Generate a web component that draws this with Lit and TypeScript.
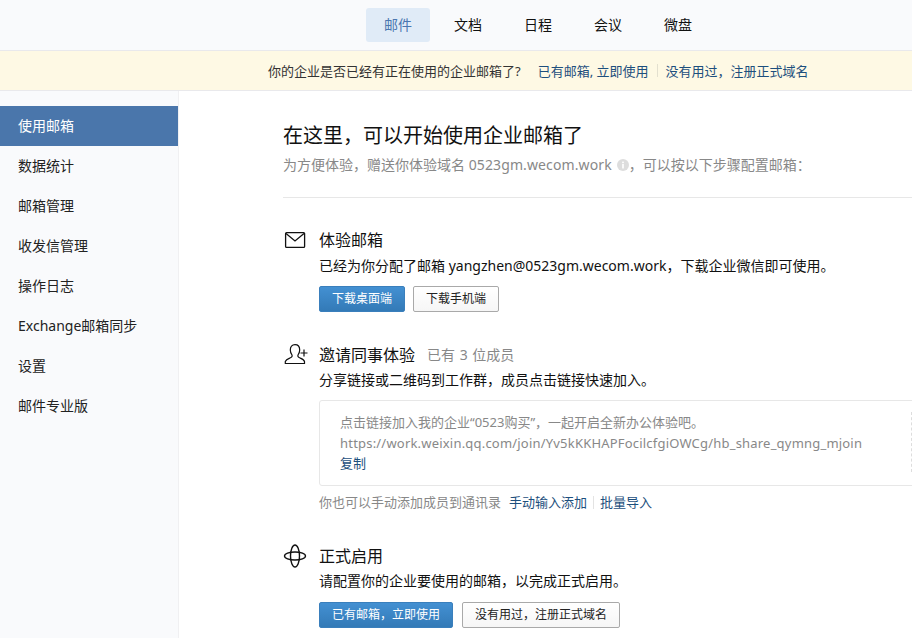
import { LitElement, html, css } from "lit";
import { customElement } from "lit/decorators.js";

const NAV = ["使用邮箱", "数据统计", "邮箱管理", "收发信管理", "操作日志", "Exchange邮箱同步", "设置", "邮件专业版"];
const TABS = ["邮件", "文档", "日程", "会议", "微盘"];

@customElement("app-root")
export class AppRoot extends LitElement {
  static styles = css`
    :host { display: block; width: 912px; height: 638px; overflow: hidden; background: #fff; font-family: "Noto Sans", "Noto Sans CJK SC", sans-serif; font-size: 14px; color: #111; }
    .top { height: 50px; display: flex; gap: 6px; padding: 8px 0 0 366px; box-sizing: border-box; background: #f9fafc; }
    .tab { width: 64px; height: 34px; line-height: 34px; text-align: center; color: #111; border-radius: 3px; }
    .tab.on { background: #e0ebf7; color: #4a76b0; }
    .banner { height: 41px; background: #fef9e4; border-top: 1px solid #e9e9ec; border-bottom: 1px solid #e9e9ec; box-sizing: border-box; display: flex; align-items: center; padding-left: 268px; font-size: 13px; color: #333; }
    .banner a { color: #1d4f7d; }
    .banner .first { margin-left: 17px; }
    .bsep { width: 1px; height: 13px; background: #e3e0cf; margin: 0 8px; }
    .body { display: flex; height: 547px; }
    .side { width: 179px; flex: none; background: #f9fafc; border-right: 1px solid #f0f0f2; box-sizing: border-box; padding-top: 15px; }
    .side div { height: 40px; line-height: 40px; padding-left: 18px; color: #222; }
    .side .on { background: #4a76ab; color: #fff; }
    .main { padding: 30px 0 0 104px; flex: 1; min-width: 0; overflow: hidden; }
    h1 { font-size: 20px; font-weight: 400; margin: 0; color: #111; line-height: 30px; }
    .sub { display: flex; align-items: center; margin-top: 4px; line-height: 20px; color: #888; white-space: pre; }
    .info { margin: 0 0 0 5px; flex: none; }
    .ls { letter-spacing: 0.12px; }
    .rule { height: 1px; background: #e7e7e7; margin: 22px 0 30px; }
    .sec { display: grid; grid-template-columns: 36px 1fr; }
    .sec + .sec { margin-top: 31px; }
    .ico { display: block; margin-top: 2px; }
    .ico.person { margin-top: 1px; }
    .ico.orbit { margin-top: 0; }
    .head { display: flex; align-items: center; height: 24px; line-height: 24px; }
    .title { font-size: 16px; color: #111; }
    .count { color: #888; margin-left: 12px; word-spacing: 1px; }
    .desc { line-height: 20px; margin-top: 4px; color: #111; white-space: nowrap; }
    .desc.tight { margin-top: 3px; }
    .btns { display: flex; gap: 8px; margin-top: 10px; }
    .btns.wide { gap: 9px; margin-top: 11px; }
    .btn { height: 26px; box-sizing: border-box; padding: 0 12px; line-height: 24px; font-size: 12px; border-radius: 2px; white-space: nowrap; border: 1px solid #a9a9a9; background: linear-gradient(#fff, #f6f6f6); color: #222; }
    .btn.pri { border-color: #3a7fbc; background: linear-gradient(#4390d2, #337ab7); color: #fff; }
    .box { margin-top: 10px; height: 86px; width: 640px; box-sizing: border-box; border: 1px solid #e7e7e7; border-radius: 3px; display: flex; align-items: center; padding: 0 0 2px 20px; color: #888; font-size: 13px; }
    .lines { width: 571px; height: 60px; flex: none; border-right: 1px dashed #ddd; line-height: 20.5px; white-space: nowrap; }
    .lines a { color: #1d4f7d; }
    .url { letter-spacing: 0.2px; }
    .foot { display: flex; align-items: center; margin: 6px 0 1px; line-height: 20px; color: #888; font-size: 13px; }
    .foot a { color: #1d4f7d; }
    .foot .l1 { margin-left: 8px; }
    .fsep { width: 1px; height: 13px; background: #e3e3e3; margin: 0 6px; }
  `;
  render() {
    return html`
      <div class="top">
        ${TABS.map((t, i) => html`<div class="tab ${i === 0 ? "on" : ""}">${t}</div>`)}
      </div>
      <div class="banner">
        <span>你的企业是否已经有正在使用的企业邮箱了?</span>
        <a class="first">已有邮箱, 立即使用</a><span class="bsep"></span><a>没有用过&#xFF0C;注册正式域名</a>
      </div>
      <div class="body">
        <div class="side">
          ${NAV.map((t, i) => html`<div class="${i === 0 ? "on" : ""}">${t}</div>`)}
        </div>
        <div class="main">
          <h1>在这里&#xFF0C;可以开始使用企业邮箱了</h1>
          <div class="sub"><span>为方便体验&#xFF0C;赠送你体验域名 <span class="ls">0523gm.wecom.work</span></span><svg class="info" width="12" height="12" viewBox="0 0 12 12"><circle cx="6" cy="6" r="6" fill="#ddd"/><rect x="5.2" y="5" width="1.6" height="4.5" fill="#fff"/><rect x="5.2" y="2.6" width="1.6" height="1.6" fill="#fff"/></svg><span>&#xFF0C;可以按以下步骤配置邮箱&#xFF1A;</span></div>
          <div class="rule"></div>

          <div class="sec">
            <svg class="ico" width="24" height="20" viewBox="0 0 24 20" fill="none" stroke="#111" stroke-width="1.3"><rect x="2.6" y="2.6" width="19" height="14.8" rx="1"/><path d="M3 3.5l9 7.5 9-7.5"/></svg>
            <div>
              <div class="head"><span class="title">体验邮箱</span></div>
              <div class="desc">已经为你分配了邮箱 yangzhen@0523gm.wecom.work&#xFF0C;下载企业微信即可使用。</div>
              <div class="btns"><div class="btn pri">下载桌面端</div><div class="btn">下载手机端</div></div>
            </div>
          </div>

          <div class="sec">
            <svg class="ico person" width="26" height="22" viewBox="0 0 26 22" fill="none" stroke="#111" stroke-width="1.2"><path d="M12 .7C9 .7 7.300 3 7.300 6 7.300 8.500 8.300 10 9 11 9.500 12.500 8.500 13.500 7 14 5 14.800 3 15.500 2.300 17.500V19.500H21.500V17.500C21 15.500 19 14.800 17 14 15.500 13.500 14.500 12.500 15 11 15.700 10 16.700 8.500 16.700 6 16.700 3 15 .7 12 .7Z"/><path d="M17.500 9h7M21 5.500v7"/></svg>
            <div>
              <div class="head"><span class="title">邀请同事体验</span><span class="count">已有 3 位成员</span></div>
              <div class="desc tight">分享链接或二维码到工作群&#xFF0C;成员点击链接快速加入。</div>
              <div class="box"><div class="lines">点击链接加入我的企业“0523购买”&#xFF0C;一起开启全新办公体验吧。<br><span class="url">https://work.weixin.qq.com/join/Yv5kKKHAPFocilcfgiOWCg/hb_share_qymng_mjoin</span><br><a>复制</a></div></div>
              <div class="foot">你也可以手动添加成员到通讯录<a class="l1">手动输入添加</a><span class="fsep"></span><a>批量导入</a></div>
            </div>
          </div>

          <div class="sec">
            <svg class="ico orbit" width="26" height="26" viewBox="0 0 26 26" fill="none" stroke="#111" stroke-width="1.4"><ellipse cx="12" cy="12" rx="4.500" ry="11"/><ellipse cx="12" cy="12" rx="10.500" ry="4"/></svg>
            <div>
              <div class="head"><span class="title">正式启用</span></div>
              <div class="desc tight">请配置你的企业要使用的邮箱&#xFF0C;以完成正式启用。</div>
              <div class="btns wide"><div class="btn pri">已有邮箱&#xFF0C;立即使用</div><div class="btn">没有用过&#xFF0C;注册正式域名</div></div>
            </div>
          </div>
        </div>
      </div>
    `;
  }
}
